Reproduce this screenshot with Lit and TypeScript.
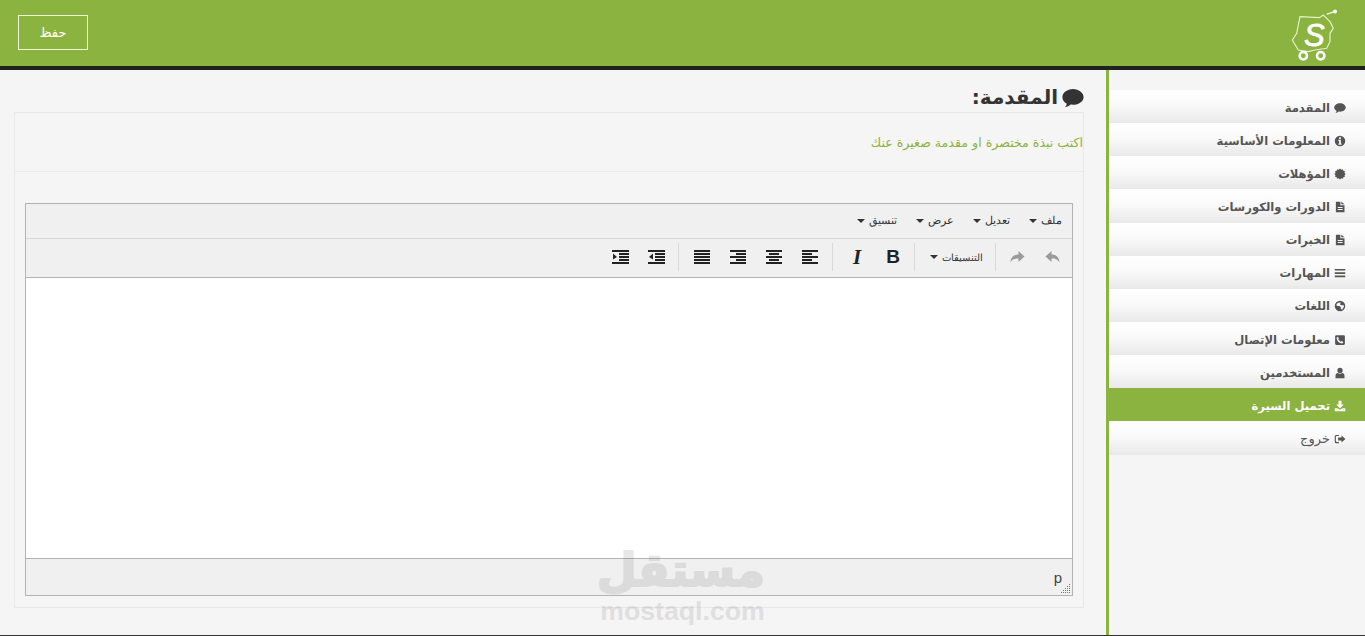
import { LitElement, html, css, svg } from "lit";
import { customElement } from "lit/decorators.js";

const fa: Record<string, any> = {
  comment: svg`<path d="M8 1.500C3.800 1.500.3 4.200.3 7.400c0 1.900 1.200 3.600 3.200 4.700-.2 1-.8 1.900-1.500 2.600 1.700-.1 3.200-.8 4.300-1.900.5.100 1.100.1 1.700.1 4.200 0 7.700-2.500 7.700-5.500S12.200 1.500 8 1.500z"/>`,
  info: svg`<path fill-rule="evenodd" d="M8 1a7 7 0 1 0 0 14A7 7 0 0 0 8 1zM6.800 3h2.400v2.200H6.800zM5.800 6.400h3.400v5h1v1.500H5.800v-1.500h1V8H5.800z"/>`,
  cert: svg`<path d="M8 .8l1.700 1.500 2.100-.7.600 2.200 2.200.5-.6 2.200L15.500 8 14 9.500l.6 2.200-2.200.5-.6 2.200-2.100-.7L8 15.200l-1.700-1.500-2.100.7-.6-2.200-2.200-.5.6-2.200L.5 8 2 6.500l-.6-2.200 2.200-.5.6-2.200 2.100.7z"/>`,
  file: svg`<path fill-rule="evenodd" d="M2.500 1h6v4.500H14V15H2.500zM9.700 1L14 4.300H9.700zM5 8v1.300h6.500V8zm0 2.700V12h6.500v-1.300z"/>`,
  bars: svg`<path d="M1 2.500h14v2.300H1zM1 6.900h14v2.300H1zM1 11.300h14v2.300H1z"/>`,
  globe: svg`<path fill-rule="evenodd" d="M8 1a7 7 0 1 0 0 14A7 7 0 0 0 8 1zM4 4.500l2.500-1.300 2.500.5L8 5.500l1.500 1.500 3-.5.800 2.500-2.300 3.500-2-.5.300-2.500L7 8H4.500L3 6.500z"/>`,
  phone: svg`<path fill-rule="evenodd" d="M3 1.500h10A1.500 1.500 0 0 1 14.500 3v10a1.500 1.500 0 0 1-1.500 1.500H3A1.500 1.500 0 0 1 1.500 13V3A1.500 1.500 0 0 1 3 1.500zM5 3.500L3.500 5c0 4 3.500 7.500 7.500 7.500L12.500 11l-2.200-1.600-1.100 1C8 10 6 8 5.600 6.800l1-1.100z"/>`,
  user: svg`<circle cx="8" cy="4.500" r="3.500"/><path d="M2 15v-3.500C2 9.500 3.500 8 5 8c1.800 1.300 4.200 1.300 6 0 1.500 0 3 1.500 3 3.500V15z"/>`,
  download: svg`<path fill-rule="evenodd" d="M6 1h4v5h3L8 11 3 6h3zM1 11h3.500L8 13l3.500-2H15v4H1zm11 1.700v1h1v-1z"/>`,
  out: svg`<path d="M6.500 2.500H3A2 2 0 0 0 1 4.500v7a2 2 0 0 0 2 2h3.500V12H3.500a1 1 0 0 1-1-1V5a1 1 0 0 1 1-1h3z"/><path d="M10 3.200L15.200 8 10 12.800V10H5.500V6H10z"/>`,
};

const nav = [
  ["المقدمة", "comment"], ["المعلومات الأساسية", "info"], ["المؤهلات", "cert"],
  ["الدورات والكورسات", "file"], ["الخبرات", "file"], ["المهارات", "bars"],
  ["اللغات", "globe"], ["معلومات الإتصال", "phone"], ["المستخدمين", "user"],
  ["تحميل السيرة", "download"], ["خروج", "out"],
];

const lines = (rows: [number, number][]) => svg`<svg class="tool" viewBox="0 0 18 16" width="18" height="16" fill="#222">${rows.map(([x, w], i) => svg`<rect x=${x} y=${i * 3 + 1} width=${w} height="2"/>`)}</svg>`;

@customElement("app-root")
export class AppRoot extends LitElement {
  static styles = css`
    :host { display: block; height: 636px; overflow: hidden; position: relative; background: #f5f5f5; font-family: "DejaVu Sans", sans-serif; }
    .top { height: 66px; background: #8bb33f; border-bottom: 4px solid #212121; display: flex; align-items: center; justify-content: space-between; padding: 0 24px 0 18px; }
    .save { width: 70px; height: 35px; box-sizing: border-box; border: 1px solid #f1f8dc; display: flex; align-items: center; justify-content: center; color: #fff; font-size: 13px; font-family: "DejaVu Sans", sans-serif; margin-top: -1px; }
    .logo { display: block; margin-top: 8px; overflow: visible; }
    .body { display: flex; height: 565px; border-bottom: 1px solid #333; }
    .main { flex: 1; min-width: 0; padding: 14px 22px 0 14px; direction: rtl; }
    h1 { margin: 0 0 1px; height: 27px; font-size: 20px; line-height: 27px; color: #333; font-weight: 700; display: flex; align-items: center; gap: 4px; }
    h1 svg { width: 22px; height: 22px; fill: #333; }
    .panel { height: 496px; box-sizing: border-box; border: 1px solid #e8e8e8; direction: ltr; display: flex; flex-direction: column; }
    .desc { height: 59px; flex: none; border-bottom: 1px solid #ececec; direction: rtl; color: #8bb33f; font-size: 12.6px; padding-top: 20px; box-sizing: border-box; line-height: 20px; }
    .editor { margin: 31px 10px 11px 10px; flex: 1; border: 1px solid #b2b2b2; display: flex; flex-direction: column; direction: rtl; }
    .menu { flex: none; background: #f0f0f0; border-bottom: 1px solid #d9d9d9; display: flex; align-items: center; padding: 0 10px 1px 0; box-sizing: content-box; gap: 19px; font-size: 11px; color: #333; font-family: "Liberation Sans", sans-serif; height: 33px; }
    .menu span, .fmt { display: inline-flex; align-items: center; gap: 4px; }
    .caret { width: 0; height: 0; border-top: 4px solid #333; border-left: 4px solid transparent; border-right: 4px solid transparent; display: inline-block; }
    .bar { height: 36px; padding-bottom: 2px; flex: none; background: #f0f0f0; border-bottom: 1px solid #b2b2b2; display: flex; align-items: center; }
    .group { display: flex; align-items: center; height: 28px; border-left: 1px solid #d9d9d9; padding-left: 3px; }
    .group.first { margin-right: 1px; }
    .group.wide { padding: 0 3px 0 6px; }
    .group.last { border-left: 0; padding: 0 3px 0 0; }
    .btn { width: 36px; height: 28px; display: flex; align-items: center; justify-content: center; color: #222; }
    .fmt { width: 77px; justify-content: center; font-size: 10px; color: #333; font-family: "Liberation Sans", sans-serif; height: 28px; }
    .b { font: 700 19px "Liberation Sans", sans-serif; }
    .i { font: italic 700 21px "Liberation Serif", serif; }
    .area { flex: 1; background: #fff; }
    .status { height: 36px; flex: none; background: #f0f0f0; border-top: 1px solid #b2b2b2; display: flex; align-items: center; padding-right: 10px; position: relative; font-size: 15px; color: #444; direction: ltr; justify-content: flex-end; font-family: "Liberation Sans", sans-serif; }
    .grip { position: absolute; right: 1px; bottom: 1px; }
    aside { width: 259px; flex: none; box-sizing: border-box; border-left: 3px solid #8bb33f; padding-top: 20px; direction: rtl; }
    .item { height: 33.150px; box-sizing: border-box; background: linear-gradient(#fff, #fafafa 45%, #e9e9e9); display: flex; align-items: center; gap: 4px; padding: 2px 19px 0 0; font-size: 11.600px; font-weight: 700; color: #555; }
    .item svg { width: 12px; height: 12px; fill: #555; flex: none; }
    .item.on { background: #8bb33f; color: #fff; margin-left: -3px; }
    .item.on svg { fill: #fff; }
    .item.thin { font-weight: 400; font-size: 13px; }
    .wm { position: absolute; left: 600px; top: 540px; width: 165px; text-align: center; color: #777; opacity: .17; pointer-events: none; }
    .wm b { display: block; font: 700 46px/60px "DejaVu Sans", sans-serif; direction: rtl; white-space: nowrap; -webkit-text-stroke: 2px #777; }
    .wm span { display: block; font: 700 26.700px/26px "Liberation Sans", sans-serif; margin-top: -2px; }
  `;

  render() {
    const t = (a: string) => html`<span>${a}<i class="caret"></i></span>`;
    return html`
      <div class="top">
        <div class="save">حفظ</div>
        <svg class="logo" width="50" height="50" viewBox="0 0 50 50" fill="none" stroke="#e6f0c8" stroke-width="1.200">
          <path d="M9 4.700L28.300 5.700 32.300 3 39 9.700 42.300 16.300 39 21.300 39 29.700 35.700 36.300 24 38 17.300 39.700 7.300 38 1.300 28 5.700 21.300 7.300 13z"/>
          <path d="M35.700 2.300L44 -.5" stroke-width="1.500"/><circle cx="44" cy="-.5" r="2" fill="#fff" stroke="none"/>
          <circle cx="12.300" cy="43.700" r="3.700" stroke="#fff" stroke-width="2.500"/><circle cx="29.700" cy="43.700" r="3.700" stroke="#fff" stroke-width="2.500"/>
          <text x="13" y="34" fill="#fff" stroke="#fff" stroke-width=".8" font-family="Liberation Sans" font-style="italic" font-size="31">S</text>
        </svg>
      </div>
      <div class="body">
        <div class="main">
          <h1><svg viewBox="0 0 16 16">${fa.comment}</svg>المقدمة:</h1>
          <div class="panel">
            <div class="desc">اكتب نبذة مختصرة او مقدمة صغيرة عنك</div>
            <div class="editor">
              <div class="menu">${t("ملف")}${t("تعديل")}${t("عرض")}${t("تنسيق")}</div>
              <div class="bar">
                <div class="group first">
                  <div class="btn"><svg width="18" height="18" viewBox="0 0 18 18" fill="#9a9a9a"><path d="M7.500 3L1.500 8.500l6 5.500v-3.500c3.500 0 6 .5 8 4-.2-5-3-8-8-8z"/></svg></div>
                  <div class="btn"><svg width="18" height="18" viewBox="0 0 18 18" fill="#9a9a9a"><path d="M10.500 3l6 5.500-6 5.500v-3.500c-3.500 0-6 .5-8 4 .2-5 3-8 8-8z"/></svg></div>
                </div>
                <div class="group"><div class="fmt">التنسيقات <i class="caret"></i></div></div>
                <div class="group wide"><div class="btn b">B</div><div class="btn i">I</div></div>
                <div class="group wide">
                  <div class="btn">${lines([[0,16],[0,10],[0,16],[0,10],[0,16]])}</div>
                  <div class="btn">${lines([[0,16],[3,10],[0,16],[3,10],[0,16]])}</div>
                  <div class="btn">${lines([[0,16],[6,10],[0,16],[6,10],[0,16]])}</div>
                  <div class="btn">${lines([[0,16],[0,16],[0,16],[0,16],[0,16]])}</div>
                </div>
                <div class="group last">
                  <div class="btn"><svg width="18" height="16" viewBox="0 0 18 16" fill="#222"><rect y="1" width="17" height="2"/><rect x="7" y="4" width="10" height="2"/><rect x="7" y="7" width="10" height="2"/><rect x="7" y="10" width="10" height="2"/><rect y="13" width="17" height="2"/><path d="M5 4.500v6L1 8z"/></svg></div>
                  <div class="btn"><svg width="18" height="16" viewBox="0 0 18 16" fill="#222"><rect y="1" width="17" height="2"/><rect x="7" y="4" width="10" height="2"/><rect x="7" y="7" width="10" height="2"/><rect x="7" y="10" width="10" height="2"/><rect y="13" width="17" height="2"/><path d="M1 4.500v6L5 8z"/></svg></div>
                </div>
              </div>
              <div class="area"></div>
              <div class="status"><span>p</span>
                <svg class="grip" width="10" height="10" viewBox="0 0 10 10" fill="#777"><rect x="8" y="0" width="1" height="1"/><rect x="6" y="2" width="1" height="1"/><rect x="8" y="2" width="1" height="1"/><rect x="4" y="4" width="1" height="1"/><rect x="6" y="4" width="1" height="1"/><rect x="8" y="4" width="1" height="1"/><rect x="2" y="6" width="1" height="1"/><rect x="4" y="6" width="1" height="1"/><rect x="6" y="6" width="1" height="1"/><rect x="8" y="6" width="1" height="1"/><rect x="0" y="8" width="1" height="1"/><rect x="2" y="8" width="1" height="1"/><rect x="4" y="8" width="1" height="1"/><rect x="6" y="8" width="1" height="1"/><rect x="8" y="8" width="1" height="1"/></svg>
              </div>
            </div>
          </div>
        </div>
        <aside>
          ${nav.map(([n, ic], i) => html`<div class="item ${i === 9 ? "on" : ""} ${i === 10 ? "thin" : ""}"><svg viewBox="0 0 16 16">${fa[ic]}</svg>${n}</div>`)}
        </aside>
      </div>
      <div class="wm"><b>مستقل</b><span>mostaql.com</span></div>
    `;
  }
}
